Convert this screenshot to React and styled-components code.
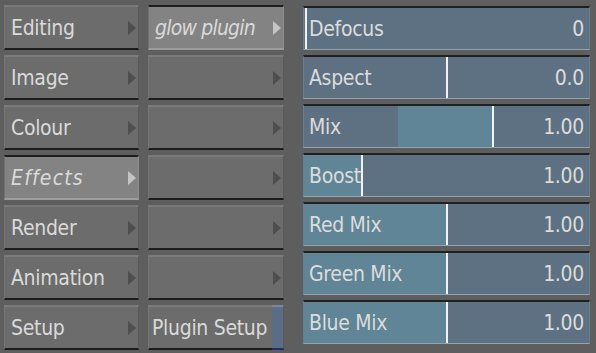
import React from "react";
import styled, { createGlobalStyle, css } from "styled-components";

const Global = createGlobalStyle`
  html, body { margin: 0; padding: 0; background: #5e5e5e; }
  body { width: 596px; height: 353px; overflow: hidden; }
`;

const FONT = `"DejaVu Sans Condensed", "DejaVu Sans", sans-serif`;

const Panel = styled.div`
  display: flex;
  align-items: flex-start;
  padding: 5px 0 0 4px;
  font-family: ${FONT};
  font-stretch: condensed;
`;

const Column = styled.div`
  display: flex;
  flex-direction: column;
  gap: 5px;
  width: ${(p) => p.$w}px;
  margin-left: ${(p) => p.$ml || 0}px;
  margin-top: ${(p) => p.$mt || 0}px;
`;

const Button = styled.div`
  position: relative;
  box-sizing: border-box;
  height: 45px;
  display: flex;
  align-items: center;
  padding: 0 0 0 ${(p) => p.$pl ?? 6}px;
  color: #dadada;
  font-size: 21px;
  letter-spacing: -0.3px;
  white-space: nowrap;
  ${(p) =>
    p.$active
      ? css`
          background: #838383;
          border-top: 2px solid #1e1e1e;
          border-bottom: 2px solid #9c9c9c;
          border-left: 1px solid #727272;
          border-right: 1px solid #8e8e8e;
        `
      : css`
          background: #6c6c6c;
          border-top: 2px solid #7b7b7b;
          border-bottom: 2px solid #1c1c1c;
          border-left: 1px solid #747474;
          border-right: 1px solid #5a5a5a;
        `}
`;

const Label = styled.span`
  flex: 1;
  ${(p) =>
    p.$italic &&
    css`
      font-style: italic;
      letter-spacing: ${p.$ls ?? 0}px;
    `}
`;

const Arrow = styled.span`
  width: 0;
  height: 0;
  margin-right: 2px;
  border-top: 7px solid transparent;
  border-bottom: 7px solid transparent;
  border-left: 8px solid ${(p) => (p.$light ? "#c4c4c4" : "#4e4e4e")};
`;

const SetupStrip = styled.span`
  align-self: stretch;
  width: 11px;
  margin: -2px 0 -2px 0;
  background: #5b6d84;
  border-top: 2px solid #7c8898;
  border-bottom: 2px solid #262a6a;
`;

const Slider = styled.div`
  position: relative;
  box-sizing: border-box;
  height: 44px;
  display: flex;
  align-items: center;
  justify-content: space-between;
  padding: 0 5px 0 5px;
  background: #5e7182;
  border-top: 2px solid #202020;
  border-bottom: 1px solid #95a3b0;
  border-left: 1px solid #6c7d8d;
  border-right: 1px solid #6c7d8d;
  color: #dcdcdc;
  font-size: 21px;
  letter-spacing: -0.3px;
  overflow: hidden;
`;

const Fill = styled.span`
  position: absolute;
  top: 0;
  bottom: 0;
  background: #5f8596;
`;

const Marker = styled.span`
  position: absolute;
  top: 0;
  bottom: 0;
  width: 2px;
  background: #f2f2f2;
`;

const SliderText = styled.span`
  position: relative;
`;

const col1 = ["Editing", "Image", "Colour", "Effects", "Render", "Animation", "Setup"];

const sliders = [
  { name: "Defocus", value: "0", from: 0, to: 0, mark: 1 },
  { name: "Aspect", value: "0.0", from: 0, to: 0, mark: 142 },
  { name: "Mix", value: "1.00", from: 94, to: 188, mark: 188 },
  { name: "Boost", value: "1.00", from: 0, to: 57, mark: 57 },
  { name: "Red Mix", value: "1.00", from: 0, to: 142, mark: 142 },
  { name: "Green Mix", value: "1.00", from: 0, to: 142, mark: 142 },
  { name: "Blue Mix", value: "1.00", from: 0, to: 142, mark: 142 },
];

export default function App() {
  return (
    <>
      <Global />
      <Panel>
        <Column $w={135}>
          {col1.map((n) => {
            const active = n === "Effects";
            return (
              <Button key={n} $active={active}>
                <Label $italic={active} $ls={1.2}>{n}</Label>
                <Arrow $light={active} />
              </Button>
            );
          })}
        </Column>
        <Column $w={136} $ml={9}>
          <Button $active>
            <Label $italic $ls={-0.8}>glow plugin</Label>
            <Arrow $light />
          </Button>
          {[1, 2, 3, 4, 5].map((i) => (
            <Button key={i}>
              <Label />
              <Arrow />
            </Button>
          ))}
          <Button $pl={3}>
            <Label>Plugin Setup</Label>
            <SetupStrip />
          </Button>
        </Column>
        <Column $w={287} $ml={19} $mt={1}>
          {sliders.map((s) => (
            <Slider key={s.name}>
              {s.to > s.from && (
                <Fill style={{ left: s.from, width: s.to - s.from }} />
              )}
              <Marker style={{ left: s.mark }} />
              <SliderText>{s.name}</SliderText>
              <SliderText>{s.value}</SliderText>
            </Slider>
          ))}
        </Column>
      </Panel>
    </>
  );
}
